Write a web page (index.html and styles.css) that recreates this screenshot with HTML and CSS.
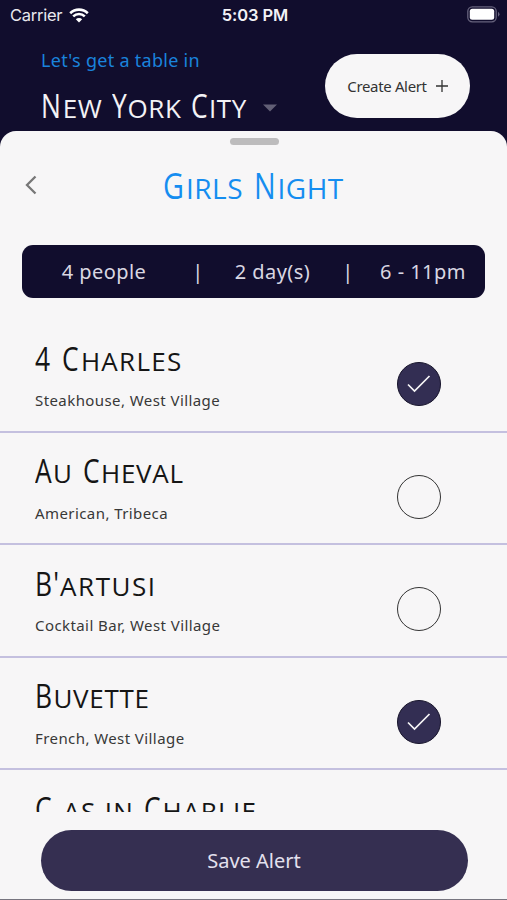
FILE: index.html
```html
<!DOCTYPE html>
<html lang="en">
<head>
<meta charset="utf-8">
<title>Girls Night</title>
<link rel="stylesheet" href="styles.css">
</head>
<body>
<div class="app">
  <div class="status">
    <span class="carrier">Carrier
      <svg class="wifi" width="20" height="15" viewBox="0 0 20 15"><path d="M1.2 5.2a12.6 12.6 0 0 1 17.6 0M4.2 8.4a8.3 8.3 0 0 1 11.6 0" fill="none" stroke="#fff" stroke-width="2.6"/><path d="M10 14.4 6.8 11.200a4.600 4.600 0 0 1 6.400 0z" fill="#fff"/></svg>
    </span>
    <span class="time">5:03 PM</span>
    <svg class="battery" width="33" height="17" viewBox="0 0 33 17"><rect x=".8" y=".8" width="28.400" height="15" rx="4.500" fill="none" stroke="#66627c" stroke-width="1.300"/><rect x="2.800" y="2.800" width="24.400" height="11" rx="2.500" fill="#fff"/><path d="M31 5.800q3 2.500 0 5z" fill="#66627c"/></svg>
  </div>
  <header class="header">
    <div class="place">
      <div class="prompt">Let's get a table in</div>
      <div class="sc city"><b>N</b><i>EW</i> <b>Y</b><i>ORK</i> <b>C</b><i>ITY</i><svg class="caret" width="14" height="8" viewBox="0 0 14 8"><path d="M0 .5h14L7 7.500z" fill="#625f76"/></svg></div>
    </div>
    <button class="create">Create Alert <svg width="12" height="12" viewBox="0 0 12 12"><path d="M6 0v12M0 6h12" stroke="#333" stroke-width="1.300"/></svg></button>
  </header>
  <main class="sheet">
    <div class="handle"></div>
    <div class="titlebar">
      <svg class="back" width="12" height="20" viewBox="0 0 12 20"><path d="M10.500 1.500 2 10l8.500 8.500" fill="none" stroke="#777" stroke-width="2.300"/></svg>
      <h1 class="sc heading"><b>G</b><i>IRLS</i> <b>N</b><i>IGHT</i></h1>
    </div>
    <div class="summary"><span class="people">4 people</span><span class="bar">|</span><span class="days">2 day(s)</span><span class="bar">|</span><span class="hours">6 - 11pm</span></div>
    <div class="list">
      <div class="row"><div><div class="sc charles"><b>4</b> <b>C</b><i>HARLES</i></div><div class="sub">Steakhouse, West Village</div></div><span class="check on"><svg width="24" height="18" viewBox="0 0 24 18"><path d="M1 9.500 7.500 16 22.500 1" fill="none" stroke="#f7f6f7" stroke-width="1.700"/></svg></span></div>
      <div class="row"><div><div class="sc cheval"><b>A</b><i>U</i> <b>C</b><i>HEVAL</i></div><div class="sub">American, Tribeca</div></div><span class="check"></span></div>
      <div class="row"><div><div class="sc artusi"><b>B'</b><i>ARTUSI</i></div><div class="sub">Cocktail Bar, West Village</div></div><span class="check"></span></div>
      <div class="row"><div><div class="sc buvette"><b>B</b><i>UVETTE</i></div><div class="sub">French, West Village</div></div><span class="check on"><svg width="24" height="18" viewBox="0 0 24 18"><path d="M1 9.500 7.500 16 22.500 1" fill="none" stroke="#f7f6f7" stroke-width="1.700"/></svg></span></div>
      <div class="row"><div><div class="sc charlie"><b>C</b> <i>AS IN</i> <b>C</b><i>HARLIE</i></div></div></div>
    </div>
    <button class="save">Save Alert</button>
  </main>
</div>
</body>
</html>
```
FILE: styles.css
```css
* { box-sizing: border-box; }
body { margin: 0; font-family: "Noto Sans", sans-serif; background: #110d2d; }
button { border: 0; padding: 0; font-family: inherit; }
svg { flex: none; }
.app { width: 507px; height: 900px; overflow: hidden; display: flex; flex-direction: column; background: #110d2d; }

.status { height: 30px; flex: none; display: grid; grid-template-columns: 1fr auto 1fr; align-items: center; padding: 0 7px 0 10px; font-family: Inter, sans-serif; font-size: 16.500px; color: #e9e8ee; }
.carrier { display: flex; align-items: center; gap: 7px; letter-spacing: -.25px; }
.wifi { margin-top: 0; }
.time { font-weight: 600; letter-spacing: -.1px; color: #f3f2f6; }
.battery { justify-self: end; margin-top: -1px; }

.header { height: 101px; flex: none; display: flex; justify-content: space-between; padding: 0 37px 0 41px; }
.prompt { margin-top: 17px; line-height: 26px; font-size: 18px; letter-spacing: .28px; color: #1a83dc; white-space: nowrap; }
.create { margin-top: 23.500px; width: 145px; height: 64.500px; border-radius: 33px; background: #f7f6f7; color: #333; font-size: 15px; letter-spacing: -.35px; display: flex; align-items: center; justify-content: center; gap: 9px; }

.sc { font-family: "Open Sans", sans-serif; font-size: 33px; line-height: 40px; font-weight: 400; color: #151515; white-space: nowrap; letter-spacing: .5px; word-spacing: 1px; }
.sc b { display: inline-block; font-weight: 400; transform: scaleX(.8); transform-origin: left; margin-right: -.11em; }
.sc i { font-style: normal; font-size: 26px; line-height: 0; }
.city { margin-top: 12.500px; color: #f3f2f6; }
.city .caret { margin-left: 16px; vertical-align: 6px; }
.charles { letter-spacing: 1.300px; }
.cheval { letter-spacing: .75px; }
.artusi { letter-spacing: 1.550px; }
.artusi b { margin-right: -.2em; }
.buvette { letter-spacing: .7px; }
.charlie { letter-spacing: 1.300px; word-spacing: 0; }

.sheet { flex: 1; min-height: 0; background: #f7f6f7; border-radius: 16px 16px 0 0; border-bottom: 1px solid #77757f; display: flex; flex-direction: column; }
.handle { flex: none; width: 49px; height: 7px; margin: 6.500px 0 0 229.500px; border-radius: 4px; background: #bdbcbd; }
.titlebar { height: 100px; flex: none; display: grid; grid-template-columns: 100px 1fr 100px; align-items: start; }
.back { margin: 30.500px 0 0 25px; }
.heading { margin: 19px 0 0; text-align: center; font-size: 36px; line-height: 44px; letter-spacing: .5px; color: #158df0; }
.heading i { font-size: 28px; }
.summary { flex: none; height: 53.500px; margin: 0 22px; border-radius: 11px; background: #110d2d; color: #d9d7e2; font-size: 20px; letter-spacing: .45px; display: grid; grid-template-columns: 164px 24px 125px 26px 124px; align-items: center; white-space: nowrap; text-align: center; }
.list { height: 514px; flex: none; overflow: hidden; padding-top: 22px; }
.row { height: 112.600px; border-bottom: 2px solid #c4c0df; padding: 18.500px 66px 0 35px; display: flex; justify-content: space-between; }
.sub { margin-top: 11.500px; line-height: 20px; font-size: 15px; letter-spacing: .42px; color: #383838; white-space: nowrap; }
.check { margin-top: 23.500px; width: 44px; height: 44px; border: 1.500px solid #333; border-radius: 50%; display: flex; align-items: center; justify-content: center; }
.on { background: #332e53; border-color: #17142b; }
.save { flex: none; width: 427px; height: 61px; margin: 18px 0 0 40.500px; border-radius: 31px; background: #352f51; color: #e4e1ee; font-size: 20px; }
```
